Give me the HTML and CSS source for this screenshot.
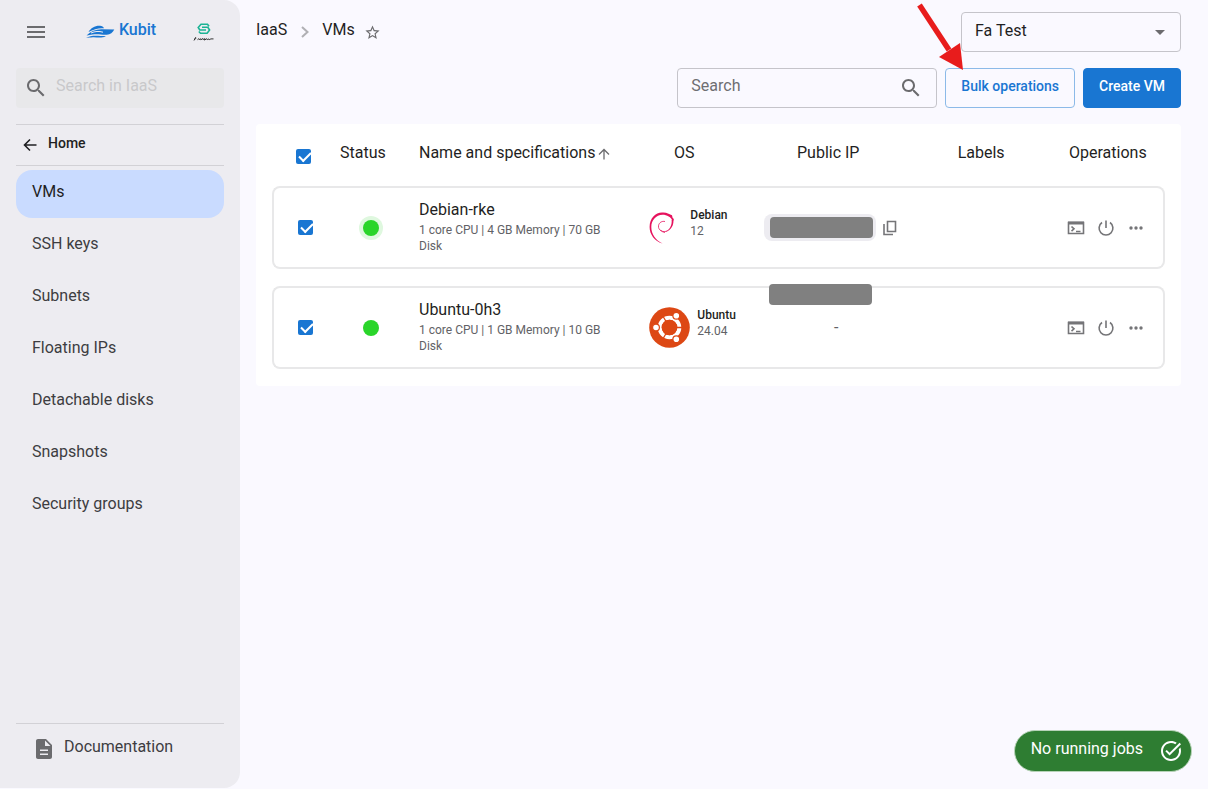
FILE: index.html
```html
<!DOCTYPE html>
<html lang="en">
<head>
<meta charset="utf-8">
<title>Kubit - VMs</title>
<link rel="stylesheet" href="styles.css">
</head>
<body>
<div class="app">
  <aside class="sidebar">
    <div class="brand-bar">
      <button class="icon-button" type="button" aria-label="Toggle menu">
        <svg width="24" height="24" viewBox="0 0 24 24"><path d="M3 18h18v-2H3v2zm0-5h18v-2H3v2zm0-7v2h18V6H3z"/></svg>
      </button>
      <a class="brand" href="#">
        <svg class="brand-mark" width="30" height="16" viewBox="0 0 30 16"><path d="M3.500 8C6 4 10 1.500 15 1.800c2 .2 3.500 1 4 2.500-5-.5-10 .7-15.500 3.700z"/><path d="M1.500 11.500C6 7 11 5 17 5.200l12.300.2c-1.500 3-4 5-7.500 5.300-7 .3-9-1.700-20.300.8z"/><path d="M1 14c5-3 10-2.500 20-1.800-5 2.300-9 .8-13 1-3 .1-5 .6-7 .8z"/><path class="brand-cut" d="M6 9c4-1.800 8-2 12-.8"/></svg>
        <span class="lift">Kubit</span>
      </a>
      <svg class="tenant" width="22" height="20" viewBox="0 0 22 20"><path class="tenant-mark" d="M16 4.200l-1.500-2H8L5.200 5.500 6.800 8H13M9 5.200h5.800L16.600 8l-2.500 3.200H7.500L5.800 9.500"/><path class="tenant-name" d="M1 18.500l1.500-3c1 0 .5 1.600-1 1.600m3 .6l1.200-1 .5 1 1.200-1 .5 1.200 1.600-1.400.4 1 2-.8-.4 1.400 2.300-1.400.5 1 1.600-.8.4.8 1.600-.8h2.600"/></svg>
    </div>
    <label class="side-search">
      <svg width="24" height="24" viewBox="0 0 24 24"><path d="M15.500 14h-.79l-.28-.27C15.410 12.590 16 11.110 16 9.500 16 5.910 13.090 3 9.500 3S3 5.910 3 9.500 5.910 16 9.500 16c1.610 0 3.090-.59 4.230-1.570l.27.28v.79l5 4.990L20.490 19l-4.990-5zm-6 0C7.010 14 5 11.990 5 9.500S7.010 5 9.500 5 14 7.010 14 9.500 11.990 14 9.500 14z"/></svg>
      <input type="text" placeholder="Search in IaaS" aria-label="Search in IaaS">
    </label>
    <a class="home" href="#">
      <svg width="16" height="16" viewBox="0 0 16 16"><path d="M14.500 8H3M8 2.500L2.500 8 8 13.500"/></svg>
      <span class="lift">Home</span>
    </a>
    <nav class="nav">
      <a class="nav-item selected" href="#">VMs</a>
      <a class="nav-item" href="#">SSH keys</a>
      <a class="nav-item" href="#">Subnets</a>
      <a class="nav-item" href="#">Floating IPs</a>
      <a class="nav-item" href="#">Detachable disks</a>
      <a class="nav-item" href="#">Snapshots</a>
      <a class="nav-item" href="#">Security groups</a>
    </nav>
    <a class="docs" href="#">
      <svg width="24" height="24" viewBox="0 0 24 24"><path d="M14 2H6c-1.100 0-2 .9-2 2v16c0 1.100.89 2 2 2h12c1.100 0 2-.9 2-2V8l-6-6zm2 16H8v-1.500h8V18zm0-4H8v-1.500h8V14zm-3-5V3.500L18.500 9H13z"/></svg>
      <span class="lift">Documentation</span>
    </a>
  </aside>

  <main class="main">
    <header class="top-row">
      <nav class="crumbs" aria-label="Breadcrumb">
        <a class="lift" href="#">IaaS</a>
        <svg class="chevron" width="8" height="12" viewBox="0 0 8 12"><path d="M1 1l5.500 5L1 11"/></svg>
        <a class="lift" href="#">VMs</a>
        <button class="star" type="button" aria-label="Add to favourites">
          <svg width="17" height="17" viewBox="0 0 24 24"><path d="M22 9.240l-7.190-.62L12 2 9.190 8.630 2 9.240l5.460 4.730L5.820 21 12 17.270 18.180 21l-1.630-7.030L22 9.240zM12 15.400l-3.760 2.270 1-4.280-3.320-2.880 4.380-.38L12 6.100l1.710 4.040 4.380.38-3.320 2.880 1 4.280L12 15.400z"/></svg>
        </button>
      </nav>
      <div class="project">
        <select aria-label="Project"><option>Fa Test</option></select>
        <svg width="24" height="24" viewBox="0 0 24 24"><path d="M7 10l5 5 5-5z"/></svg>
      </div>
    </header>

    <div class="toolbar">
      <label class="search">
        <input type="text" placeholder="Search" aria-label="Search">
        <svg width="24" height="24" viewBox="0 0 24 24"><path d="M15.500 14h-.79l-.28-.27C15.410 12.590 16 11.110 16 9.500 16 5.910 13.090 3 9.500 3S3 5.910 3 9.500 5.910 16 9.500 16c1.610 0 3.090-.59 4.230-1.570l.27.28v.79l5 4.990L20.490 19l-4.990-5zm-6 0C7.010 14 5 11.990 5 9.500S7.010 5 9.500 5 14 7.010 14 9.500 11.990 14 9.500 14z"/></svg>
      </label>
      <div class="bulk-wrap">
        <button class="btn outlined" type="button">Bulk operations</button>
        <svg class="pointer" width="48" height="70" viewBox="0 0 48 70"><path d="M2.500 3L32 48" stroke="#e81c1c" stroke-width="5.500"/><path fill="#e81c1c" d="M46 68L22 55l21-14z"/></svg>
      </div>
      <button class="btn filled" type="button">Create VM</button>
    </div>

    <section class="panel">
      <table class="vms">
        <colgroup>
          <col class="c-check"><col class="c-status"><col class="c-name"><col class="c-os"><col class="c-ip"><col class="c-labels"><col class="c-ops">
        </colgroup>
        <thead>
          <tr>
            <th class="check"><input type="checkbox" checked aria-label="Select all"></th>
            <th class="status-head">Status</th>
            <th class="name">Name and specifications<svg class="sort" width="12" height="12" viewBox="0 0 12 12"><path d="M6 11.500V1.500M1 6.500l5-5 5 5"/></svg></th>
            <th>OS</th>
            <th>Public IP</th>
            <th>Labels</th>
            <th class="ops-head">Operations</th>
          </tr>
        </thead>
        <tbody>
          <tr>
            <td class="check"><input type="checkbox" checked aria-label="Select Debian-rke"></td>
            <td class="status"><span class="dot halo"></span></td>
            <td class="name"><div class="title">Debian-rke</div><div class="sub">1 core CPU | 4 GB Memory | 70 GB Disk</div></td>
            <td class="os"><div class="os-box wide">
              <svg class="debian" width="26" height="32" viewBox="0 0 26 32"><path d="M13.500 31.500C5.500 29 .6 22.500.6 15 .6 6.500 6.500.6 13 .6c2.500-.2 4.500.2 6.500 1.200l3.500 1.400.6 2.600 1.200 1.400-.8 2C22 5 18 2.800 13.500 2.800 7 3 2.300 8.500 2.300 15c0 7 4 13 11.200 16.500z"/><path d="M24.300 6.500c1 6-2 12.500-8.300 13.300 4.500-1.800 7.300-6.300 6.600-12z"/><path class="thin" d="M18.500 18.800c-4.500 2.200-9.500-.5-9-5C10 10.500 13 8.800 16 9.500M16 20.500c-2-.3-3.500-1.200-4.500-2.500"/></svg>
              <div class="os-text"><b>Debian</b><span>12</span></div></div></td>
            <td class="ip"><div class="ip-box"><span class="chip"><span class="mask"></span></span>
              <button class="mini" type="button" aria-label="Copy IP"><svg width="16" height="16" viewBox="0 0 16 16"><path class="line" d="M5.500 1.500h8v10h-8zM2 4v10.500h9"/></svg></button></div></td>
            <td></td>
            <td class="ops"><div class="ops-box">
              <button class="mini" type="button" aria-label="Console"><svg width="18" height="18" viewBox="0 0 18 18"><path class="line" d="M1.500 3.500h15v11h-15z"/><path d="M1 2.500h16v3H1z"/><path class="line" d="M4.500 7.500l2.500 2.300-2.500 2.400M9 12.500h4.500"/></svg></button>
              <button class="mini" type="button" aria-label="Power"><svg width="18" height="18" viewBox="0 0 18 18"><path class="line" d="M9 1.500V9M5 3.500a6.900 6.900 0 1 0 8 0"/></svg></button>
              <button class="mini" type="button" aria-label="More"><svg width="18" height="18" viewBox="0 0 18 18"><circle cx="4" cy="9" r="1.700"/><circle cx="9" cy="9" r="1.700"/><circle cx="14" cy="9" r="1.700"/></svg></button>
            </div></td>
          </tr>
          <tr>
            <td class="check"><input type="checkbox" checked aria-label="Select Ubuntu-0h3"></td>
            <td class="status"><span class="dot"></span></td>
            <td class="name"><div class="title">Ubuntu-0h3</div><div class="sub">1 core CPU | 1 GB Memory | 10 GB Disk</div></td>
            <td class="os"><div class="os-box">
              <svg width="41" height="41" viewBox="0 0 41 41"><circle cx="20.500" cy="20.500" r="20.300" fill="#dd4814"/><circle cx="20.500" cy="20.500" r="9.800" fill="none" stroke="#fff" stroke-width="4"/><g stroke="#dd4814" stroke-width="1.300"><path d="M20.500 20.500h13M20.500 20.500L14 9.200M20.500 20.500L14 31.800"/></g><circle cx="20.500" cy="20.500" r="7.800" fill="#dd4814"/><g fill="#fff" stroke="#dd4814" stroke-width="1.200"><circle cx="7" cy="20.500" r="3.400"/><circle cx="27.300" cy="8.800" r="3.400"/><circle cx="27.300" cy="32.200" r="3.400"/></g></svg>
              <div class="os-text"><b>Ubuntu</b><span>24.04</span></div></div></td>
            <td class="ip"><span class="mask floating"></span><span class="none">-</span></td>
            <td></td>
            <td class="ops"><div class="ops-box">
              <button class="mini" type="button" aria-label="Console"><svg width="18" height="18" viewBox="0 0 18 18"><path class="line" d="M1.500 3.500h15v11h-15z"/><path d="M1 2.500h16v3H1z"/><path class="line" d="M4.500 7.500l2.500 2.300-2.500 2.400M9 12.500h4.500"/></svg></button>
              <button class="mini" type="button" aria-label="Power"><svg width="18" height="18" viewBox="0 0 18 18"><path class="line" d="M9 1.500V9M5 3.500a6.900 6.900 0 1 0 8 0"/></svg></button>
              <button class="mini" type="button" aria-label="More"><svg width="18" height="18" viewBox="0 0 18 18"><circle cx="4" cy="9" r="1.700"/><circle cx="9" cy="9" r="1.700"/><circle cx="14" cy="9" r="1.700"/></svg></button>
            </div></td>
          </tr>
        </tbody>
      </table>
    </section>
  </main>
</div>
<button class="jobs" type="button">
  <span class="lift">No running jobs</span>
  <svg width="24" height="24" viewBox="0 0 24 24"><path d="M22 5.180L10.590 16.600l-4.240-4.240 1.410-1.410 2.830 2.830 10-10L22 5.180zm-2.210 5.040c.13.570.21 1.170.21 1.780 0 4.420-3.580 8-8 8s-8-3.580-8-8 3.580-8 8-8c1.580 0 3.040.46 4.280 1.250l1.440-1.440C16.100 2.670 14.130 2 12 2 6.480 2 2 6.480 2 12s4.480 10 10 10 10-4.480 10-10c0-1.190-.22-2.330-.6-3.390l-1.610 1.610z"/></svg>
</button>
</body>
</html>
```

FILE: styles.css
```css
* { box-sizing: border-box; }

body {
  margin: 0;
  background: #faf9ff;
  color: #1f1f23;
  font: 16px/24px Roboto, "Liberation Sans", sans-serif;
}

a { color: inherit; text-decoration: none; }
button, input, select { font: inherit; color: inherit; }
button { cursor: pointer; }
svg { display: block; flex: none; fill: #6b6b6e; }

/* labels sit slightly above the centre line of the icons beside them */
.lift { padding-bottom: 4px; }

.app { display: flex; min-height: 100vh; }

.sidebar {
  display: flex;
  flex-direction: column;
  flex: none;
  width: 240px;
  margin-bottom: 1px;
  padding: 12px 16px;
  background: #edecf1;
  border-radius: 0 16px 16px 0;
}

.brand-bar { display: flex; align-items: center; height: 40px; padding: 0 9px 0 8px; }
.icon-button, .mini, .star { padding: 0; border: 0; background: none; }
.brand { display: flex; align-items: center; gap: 4px; margin: 0 auto; color: #1976d2; font-weight: 500; }
.brand-mark { fill: #1976d2; }
.brand-cut { fill: none; stroke: #edecf1; stroke-width: 1; }
.tenant path { fill: none; }
.tenant-mark { stroke: #1bb394; stroke-width: 1.6; }
.tenant-name { stroke: #333; stroke-width: 1; }

.side-search {
  display: flex;
  align-items: center;
  gap: 8px;
  height: 40px;
  margin: 16px 0;
  padding: 0 8px;
  background: #e8e8ea;
  border-radius: 4px;
}
.side-search input, .search input {
  flex: 1;
  min-width: 0;
  padding: 0 0 4px;
  border: 0;
  outline: 0;
  background: none;
}
.side-search input::placeholder { color: #c8c8cb; opacity: 1; }

.home {
  display: flex;
  align-items: center;
  gap: 10px;
  height: 42px;
  padding-left: 6px;
  border: solid #d2d1d6;
  border-width: 1px 0;
  font-size: 14px;
  font-weight: 500;
}
.home svg { fill: none; stroke: #1f1f23; stroke-width: 1.6; }

.nav { display: flex; flex-direction: column; gap: 4px; margin-top: 4px; }
.nav-item {
  height: 48px;
  padding: 10px 16px;
  border-radius: 16px;
  color: #3d3d41;
}
.nav-item.selected { background: #c9dbff; color: #1f1f23; }

.docs {
  display: flex;
  align-items: center;
  gap: 8px;
  height: 53px;
  margin-top: auto;
  padding: 0 16px 3px;
  border-top: 1px solid #d2d1d6;
  color: #3d3d41;
}

.main { flex: 1; min-width: 0; padding: 12px 27px 16px 16px; }

.top-row { display: flex; justify-content: space-between; align-items: center; }
.crumbs { display: flex; align-items: center; }
.chevron { margin: 0 13px 0 14px; fill: none; stroke: #b0b0b4; stroke-width: 2; }
.star { margin-left: 9px; }

.project { position: relative; width: 220px; }
.project select {
  display: block;
  width: 100%;
  height: 40px;
  padding: 0 32px 3px 13px;
  border: 1px solid #c5c4ca;
  border-radius: 4px;
  background: transparent;
  appearance: none;
}
.project svg { position: absolute; top: 8px; right: 9px; pointer-events: none; }

.toolbar { display: flex; justify-content: flex-end; gap: 8px; margin: 16px 0; }
.search {
  display: flex;
  align-items: center;
  width: 260px;
  height: 40px;
  padding: 0 13px;
  border: 1px solid #c5c4ca;
  border-radius: 4px;
}
.search input::placeholder { color: #6e6e72; opacity: 1; }

.btn {
  height: 40px;
  padding: 0 15px 4px;
  border: 1px solid #1976d2;
  border-radius: 4px;
  font-size: 14px;
  font-weight: 500;
  white-space: nowrap;
}
.btn.outlined { border-color: #8cbae8; background: transparent; color: #1976d2; }
.btn.filled { background: #1976d2; color: #fff; }
.bulk-wrap { position: relative; }
.pointer { position: absolute; left: -28px; top: -66px; pointer-events: none; }

.panel { padding: 0 16px; background: #fff; border-radius: 4px; }
.vms { width: 100%; table-layout: fixed; border-collapse: separate; border-spacing: 0 17px; }
.c-check { width: 66px; }
.c-status { width: 65px; }
.c-name { width: 24%; }
.c-os { width: 15%; }
.c-labels { width: 17%; }
.c-ops { width: 108px; }

.vms th { height: 28px; padding: 0 0 4px; font-weight: 400; white-space: nowrap; }
.vms th.check { padding: 2px 4px 0 0; }
.vms th.status-head { padding-left: 2px; text-align: left; }
.vms th.name, .vms td.name { padding-left: 16px; text-align: left; }
.vms th.ops-head { padding-left: 12px; text-align: left; }
.sort { display: inline; margin-left: 3px; vertical-align: -2px; fill: none; stroke: #6b6b6e; stroke-width: 1.3; }

.vms td { height: 83px; padding: 0; border: solid #e8e8e9; border-width: 2px 0; }
.vms td:first-child { border-left-width: 2px; border-radius: 8px 0 0 8px; }
.vms td:last-child { border-right-width: 2px; border-radius: 0 8px 8px 0; }
.vms td.name { padding: 0 8px 4px 16px; }
.vms td.check { padding-right: 2px; }
.check, .status { text-align: center; }

.check input {
  display: block;
  width: 15px;
  height: 15px;
  margin: 0 auto;
  overflow: hidden;
  appearance: none;
  border-radius: 2px;
  background: #1976d2;
}
.check input:checked::after {
  content: "";
  display: block;
  width: 10px;
  height: 5px;
  margin: 3px 0 0 3px;
  border: solid #fff;
  border-width: 0 0 2px 2px;
  transform: rotate(-45deg);
}

.dot { display: block; width: 16px; height: 16px; margin: 0 auto; border-radius: 50%; background: #2ad52a; }
.dot.halo { box-shadow: 0 0 0 4px #dff8df; }

.sub, .os-text { font-size: 12px; line-height: 16px; color: #626266; }

.os-box { display: flex; align-items: center; gap: 7px; padding-left: 32px; }
.os-box.wide { gap: 15px; }
.os-text { display: flex; flex-direction: column; padding-bottom: 10px; }
.os-text b { font-weight: 500; color: #1f1f23; }
.debian { fill: #e6125d; }
.debian .thin { fill: none; stroke: #e6125d; stroke-width: 0.8; }

.vms td.ip { position: relative; text-align: center; }
.ip-box { display: flex; align-items: center; gap: 6px; padding-left: 13px; }
.chip { display: flex; padding: 3px 3px 3px 6px; border-radius: 8px; background: #edecf1; }
.mask { width: 103px; height: 21px; border-radius: 4px; background: #808080; }
.mask.floating { position: absolute; top: -4px; left: 18px; }
.none { padding-left: 16px; color: #626266; }

.mini svg { fill: #757578; }
.mini .line { fill: none; stroke: #757578; stroke-width: 1.6; }
.ops-box { display: flex; gap: 12px; padding-left: 10px; }

.jobs {
  position: fixed;
  right: 16px;
  bottom: 17px;
  display: flex;
  align-items: center;
  gap: 16px;
  height: 42px;
  padding: 0 8px 0 16px;
  border: 1px solid #b7d3b8;
  border-radius: 21px;
  background: #2e7d32;
  color: #fff;
}
.jobs svg { fill: #fff; }
```
